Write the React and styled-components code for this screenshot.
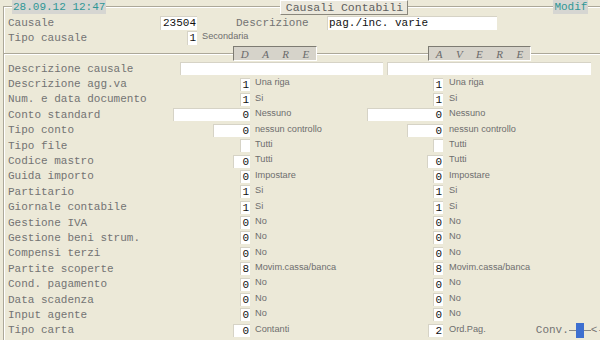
import styled, { createGlobalStyle } from "styled-components"

const GlobalStyle = createGlobalStyle`
  html, body {
    margin: 0;
    padding: 0;
    background: #ece9d8;
  }
`

const mono = `"Liberation Mono", "Courier New", monospace`
const sans = `"Liberation Sans", Arial, sans-serif`

const Screen = styled.div`
  width: 600px;
  height: 340px;
  overflow: hidden;
  position: relative;
  background:
    linear-gradient(#aca899, #aca899) 3px 6px / 597px 1px no-repeat,
    linear-gradient(#fff, #fff) 4px 7px / 596px 1px no-repeat,
    linear-gradient(#aca899, #aca899) 3px 6px / 1px 334px no-repeat,
    linear-gradient(#fff, #fff) 4px 7px / 1px 333px no-repeat,
    #ece9d8;
  font-family: ${mono};
`

const TopBar = styled.div`
  display: flex;
  align-items: flex-start;
  height: 15px;
`

const Stamp = styled.div`
  margin-left: ${p => p.$ml}px;
  height: 14px;
  padding: 0 1px;
  background: #d6d6d2;
  color: #2f9696;
  font-size: 11px;
  line-height: 14px;
`

const Title = styled.div`
  margin-left: 174px;
  width: 126px;
  height: 13px;
  background: #ebe8dc;
  border-top: 1px solid #fff;
  border-left: 1px solid #fff;
  border-right: 1px solid #8a877c;
  border-bottom: 1px solid #8a877c;
  color: #606060;
  font-size: 11.5px;
  line-height: 13px;
  text-align: center;
`

const HeadRow = styled.div`
  display: flex;
  align-items: center;
  height: 15px;
  padding-left: 8px;
`

const Label = styled.span`
  width: ${p => (p.$w ? `${p.$w}px` : "auto")};
  flex: none;
  margin-left: ${p => p.$ml || 0}px;
  color: #737373;
  font-family: ${mono};
  font-size: 11px;
  white-space: nowrap;
`

const Field = styled.div`
  flex: none;
  box-sizing: border-box;
  width: ${p => p.$w}px;
  height: ${p => p.$h || 13}px;
  margin-left: ${p => p.$ml || 0}px;
  background: #fff;
  border-top: 1px solid #d6d3c6;
  border-left: 1px solid #d6d3c6;
  color: #111;
  font-family: ${mono};
  font-size: 11px;
  line-height: 13px;
  text-align: ${p => (p.$left ? "left" : "right")};
  padding: 0 1px;
  white-space: nowrap;
  overflow: hidden;
`

const BoxSlot = styled.div`
  flex: none;
  width: ${p => p.$w}px;
  display: flex;
  justify-content: flex-end;
`

const Note = styled.span`
  align-self: flex-start;
  margin-top: 1px;
  padding-left: ${p => p.$pl || 0}px;
  color: #6e6e6e;
  font-family: ${sans};
  font-size: 9.2px;
  line-height: 11px;
  white-space: nowrap;
`

const Divider = styled.div`
  display: flex;
  height: 16px;
  background:
    linear-gradient(#aca899, #aca899) 4px 8px / 596px 1px no-repeat,
    linear-gradient(#fff, #fff) 4px 9px / 596px 1px no-repeat;
`

const Section = styled.div`
  box-sizing: border-box;
  margin-left: ${p => p.$ml}px;
  margin-top: 1px;
  width: ${p => p.$w}px;
  height: 15px;
  display: flex;
  justify-content: space-around;
  align-items: center;
  background: #d6d3ca;
  border-top: 1px solid #7d7b72;
  border-left: 1px solid #7d7b72;
  border-right: 1px solid #fff;
  border-bottom: 1px solid #fff;
  color: #6a6a6a;
  font-family: "Liberation Serif", "Times New Roman", serif;
  font-style: italic;
  font-size: 11px;
`

const DescRow = styled.div`
  display: flex;
  align-items: center;
  height: 15.4px;
  padding-left: 8px;
`

const Row = styled.div`
  display: grid;
  grid-template-columns: 242px 117px 76px 1fr;
  align-items: center;
  height: 15.4px;
  padding-left: 8px;
`

const LeftCell = styled.div`
  display: flex;
  justify-content: space-between;
  align-items: center;
`

const TailCell = styled.div`
  display: flex;
  align-items: center;
  height: 100%;
  min-width: 0;
`

const Conv = styled.div`
  display: flex;
  align-items: center;
  margin-left: auto;
  margin-right: -4px;
  color: #737373;
  font-family: ${mono};
  font-size: 11px;
  white-space: nowrap;
`

const Stub = styled.span`
  width: 7px;
  height: 1px;
  background: #888;
`

const Cursor = styled.span`
  width: 8px;
  height: 15px;
  background: #3d6fd0;
`

const rows = [
  ["Descrizione agg.va", "1", 10, "Una riga", "1", 10, "Una riga"],
  ["Num. e data documento", "1", 10, "Si", "1", 10, "Si"],
  ["Conto standard", "0", 77, "Nessuno", "0", 76, "Nessuno"],
  ["Tipo conto", "0", 37, "nessun controllo", "0", 36, "nessun controllo"],
  ["Tipo file", "", 10, "Tutti", "", 10, "Tutti"],
  ["Codice mastro", "0", 17, "Tutti", "0", 16, "Tutti"],
  ["Guida importo", "0", 10, "Impostare", "0", 10, "Impostare"],
  ["Partitario", "1", 10, "Si", "1", 10, "Si"],
  ["Giornale contabile", "1", 10, "Si", "1", 10, "Si"],
  ["Gestione IVA", "0", 10, "No", "0", 10, "No"],
  ["Gestione beni strum.", "0", 10, "No", "0", 10, "No"],
  ["Compensi terzi", "0", 10, "No", "0", 10, "No"],
  ["Partite scoperte", "8", 10, "Movim.cassa/banca", "8", 10, "Movim.cassa/banca"],
  ["Cond. pagamento", "0", 10, "No", "0", 10, "No"],
  ["Data scadenza", "0", 10, "No", "0", 10, "No"],
  ["Input agente", "0", 10, "No", "0", 10, "No"],
  ["Tipo carta", "0", 17, "Contanti", "2", 15, "Ord.Pag."],
]

const App = () => {
  return (
    <>
      <GlobalStyle />
      <Screen>
        <TopBar>
          <Stamp $ml={12}>28.09.12 12:47</Stamp>
          <Title>Causali Contabili</Title>
          <Stamp $ml={145}>Modif</Stamp>
        </TopBar>

        <HeadRow>
          <Label $w={152}>Causale</Label>
          <Field $w={37} $h={14}>23504</Field>
          <Label $ml={39} $w={91}>Descrizione</Label>
          <Field $w={170} $h={14} $left>pag./inc. varie</Field>
        </HeadRow>
        <HeadRow>
          <Label $w={152}>Tipo causale</Label>
          <BoxSlot $w={37}>
            <Field $w={10} $h={14}>1</Field>
          </BoxSlot>
          <Note $pl={5}>Secondaria</Note>
        </HeadRow>

        <Divider>
          <Section $ml={233} $w={84}>
            <span>D</span><span>A</span><span>R</span><span>E</span>
          </Section>
          <Section $ml={111} $w={103}>
            <span>A</span><span>V</span><span>E</span><span>R</span><span>E</span>
          </Section>
        </Divider>

        <DescRow>
          <Label $w={172}>Descrizione causale</Label>
          <Field $w={203} $left />
          <Field $w={204} $ml={4} $left />
        </DescRow>

        {rows.map(([label, lv, lw, ld, rv, rw, rd], i) => (
          <Row key={label}>
            <LeftCell>
              <Label>{label}</Label>
              <Field $w={lw}>{lv}</Field>
            </LeftCell>
            <Note $pl={5}>{ld}</Note>
            <BoxSlot $w={76}>
              <Field $w={rw}>{rv}</Field>
            </BoxSlot>
            <TailCell>
              <Note $pl={6}>{rd}</Note>
              {i === rows.length - 1 && (
                <Conv>
                  Conv.<Stub /><Cursor /><Stub />&lt;-
                </Conv>
              )}
            </TailCell>
          </Row>
        ))}
      </Screen>
    </>
  )
}

export default App
